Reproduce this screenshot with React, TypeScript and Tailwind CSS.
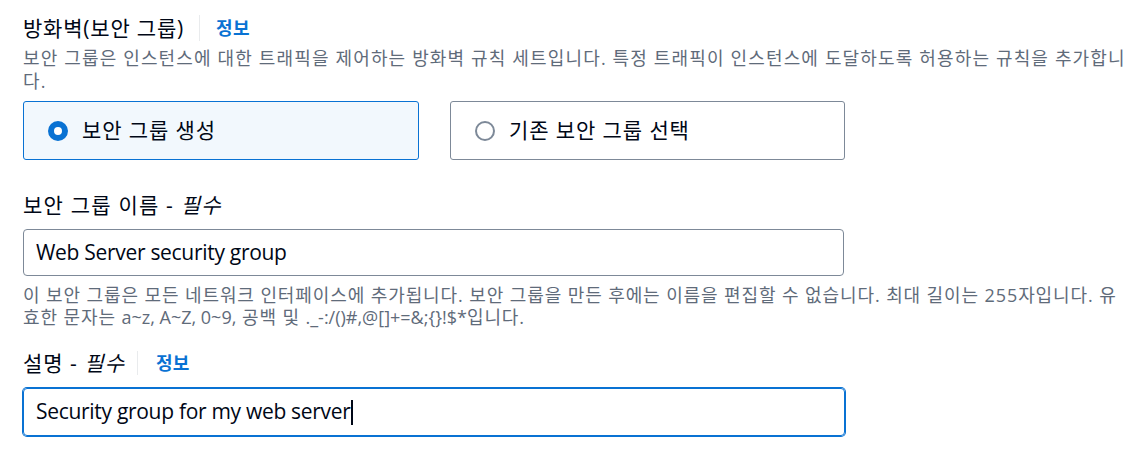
import React from "react";

const font = { fontFamily: '"Open Sans", "Noto Sans CJK KR", sans-serif' };

export default function App() {
  return (
    <div
      className="w-[1145px] h-[457px] bg-white overflow-hidden pl-[23px] pt-[14px] text-[#000716]"
      style={font}
    >
      {/* Heading */}
      <div className="flex items-center h-[28px]">
        <span className="text-[21px] leading-[28px] tracking-[0.8px]">방화벽(보안 그룹)</span>
        <span className="ml-[15px] mr-[16px] w-px h-[26px] bg-[#e9ebed]" />
        <span className="text-[18px] font-bold text-[#0972d3] leading-[28px] tracking-[0.3px]">정보</span>
      </div>
      <div className="mt-[5px] text-[18px] leading-[23px] tracking-[1.15px] text-[#5f6b7a] whitespace-nowrap">
        <div>보안 그룹은 인스턴스에 대한 트래픽을 제어하는 방화벽 규칙 세트입니다. 특정 트래픽이 인스턴스에 도달하도록 허용하는 규칙을 추가합니</div>
        <div>다.</div>
      </div>

      {/* Radio tiles */}
      <div className="flex gap-[31px] mt-[8px]">
        <div className="w-[396px] h-[59px] rounded-[3px] border border-[#0972d3] bg-[#f2f8fd] flex items-center pl-[24px]">
          <span className="w-[20px] h-[20px] rounded-full border-[6.5px] border-[#0972d3] bg-white" />
          <span className="ml-[14px] text-[21px] tracking-[0.9px]">보안 그룹 생성</span>
        </div>
        <div className="w-[395px] h-[59px] rounded-[3px] border border-[#7d8998] bg-white flex items-center pl-[24px]">
          <span className="w-[20px] h-[20px] rounded-full border-2 border-[#7d8998] bg-white" />
          <span className="ml-[14px] text-[21px] tracking-[0.9px]">기존 보안 그룹 선택</span>
        </div>
      </div>

      {/* Name */}
      <div className="mt-[31px] text-[21px] leading-[28px] tracking-[1.2px]">
        보안 그룹 이름 - <i>필수</i>
      </div>
      <div className="mt-[10px] w-[821px] h-[47px] rounded-[4px] border border-[#7d8998] flex items-center px-[12px] text-[21px] tracking-[-0.3px]">
        Web Server security group
      </div>
      <div className="mt-[8px] text-[18px] leading-[22px] tracking-[0.9px] text-[#5f6b7a] whitespace-nowrap">
        <div>이 보안 그룹은 모든 네트워크 인터페이스에 추가됩니다. 보안 그룹을 만든 후에는 이름을 편집할 수 없습니다. 최대 길이는 255자입니다. 유</div>
        <div>
          효한 문자는 <span className="tracking-normal">a~z, A~Z, 0~9,</span> 공백 및{" "}
          <span className="tracking-normal">._-:/()#,@[]+=&amp;;{"{}"}!$*</span>입니다.
        </div>
      </div>

      {/* Description */}
      <div className="mt-[21px] flex items-center h-[28px]">
        <span className="text-[21px] leading-[28px] tracking-[1px]">
          설명 - <i>필수</i>
        </span>
        <span className="ml-[12px] mr-[18px] w-px h-[24px] bg-[#e9ebed]" />
        <span className="text-[18px] font-bold text-[#0972d3] leading-[28px] tracking-[0.3px]">정보</span>
      </div>
      <div className="mt-[11px] w-[822px] h-[48px] rounded-[4px] border border-[#0972d3] shadow-[0_0_0_1px_#0972d3] flex items-center px-[12px] text-[21px] tracking-[-0.3px]">
        <span>Security group for my web server</span>
        <span className="w-[2px] h-[25px] bg-[#000716]" />
      </div>
    </div>
  );
}
